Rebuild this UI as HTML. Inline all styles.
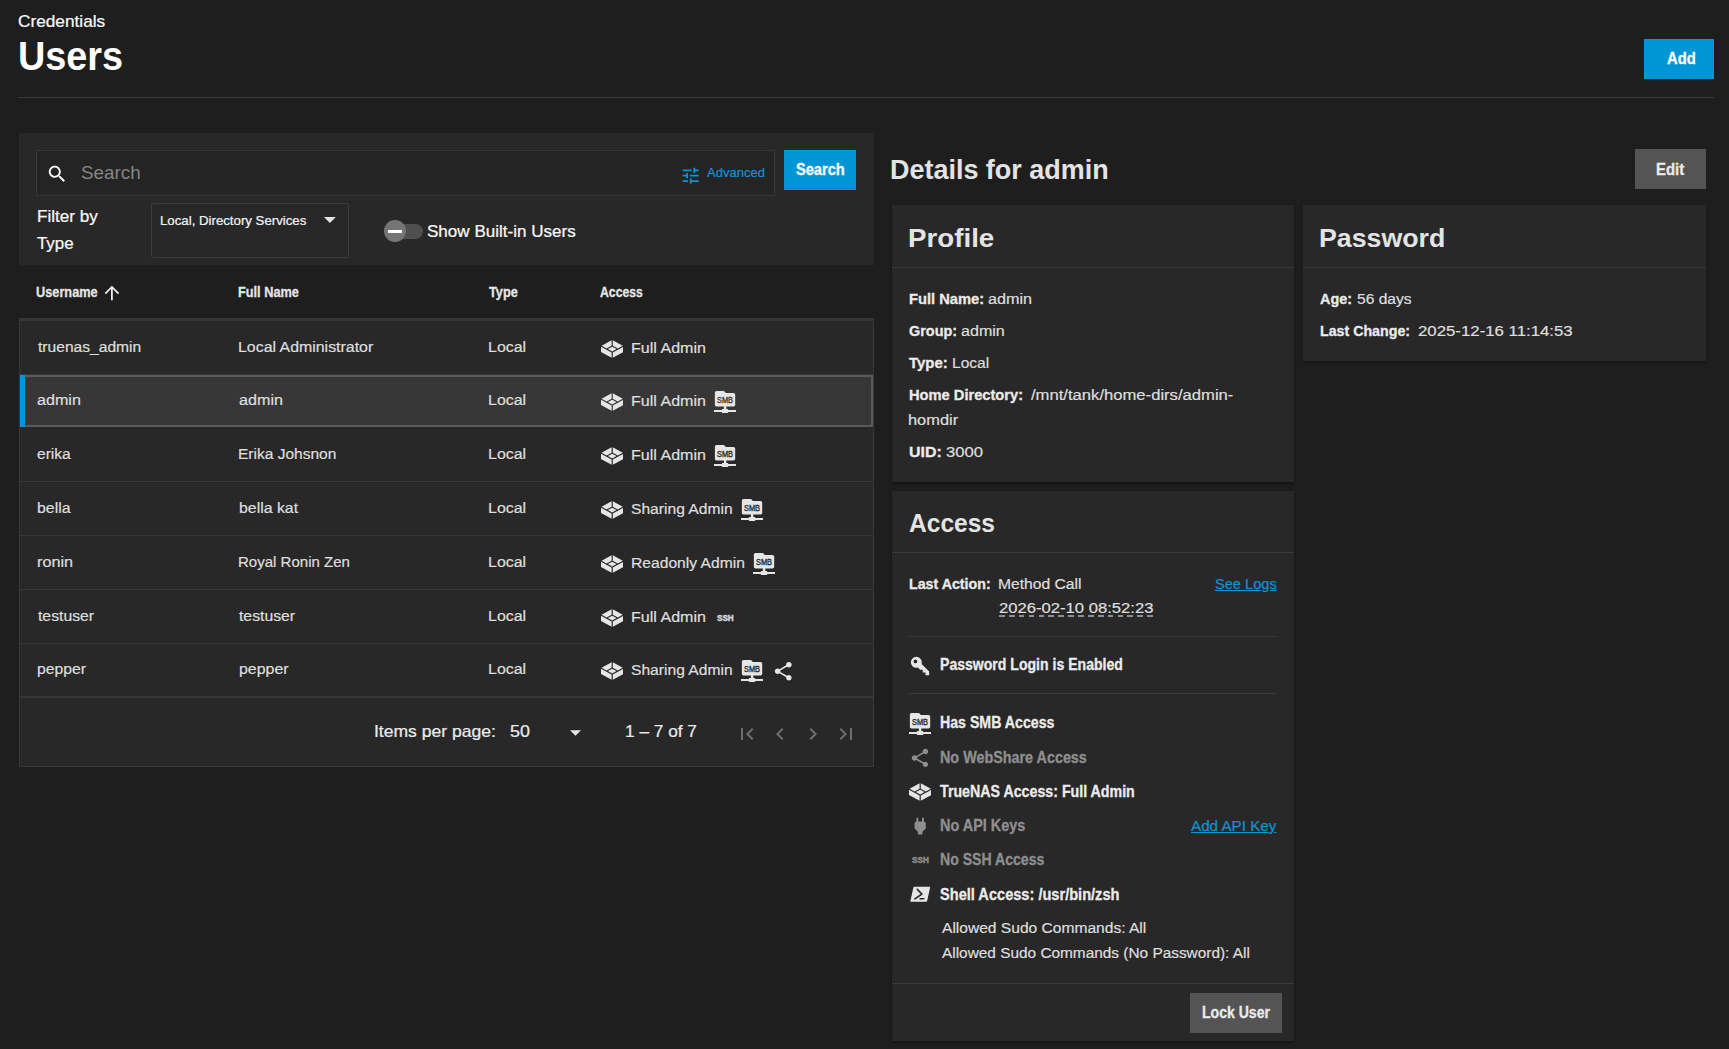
<!DOCTYPE html>
<html lang="en">
<head>
<meta charset="utf-8">
<title>Users</title>
<style>
*{box-sizing:border-box;margin:0;padding:0}
html,body{width:1729px;height:1049px;overflow:hidden;background:#1e1e1e}
body{font-family:"Liberation Sans",sans-serif;color:#fff;position:relative}
.abs{position:absolute}
.t{position:absolute;white-space:nowrap;line-height:1;transform-origin:0 0}
svg{display:block;position:absolute}
.b{font-weight:bold}
.bx{position:absolute;height:40px}
.primary{background:#0095d5}
.grey{background:#545454}
.hr{position:absolute;height:1px;background:#3a3a3a}
.card{position:absolute;background:#282828;box-shadow:0 2px 3px rgba(0,0,0,.35)}
.u{text-decoration:underline}
.ssh,.ssho{-webkit-text-stroke:.45px currentColor}
.acc,.off,.lbl,.th,.btn,.btng{-webkit-text-stroke:.3px currentColor}
.td,.val,.pg,.lab,.crumb,.link,.sel,.adv{-webkit-text-stroke:.22px currentColor}
.crumb{font-size:16.4px;color:#fafafa}
.h1{font-size:41.5px;color:#fff;font-weight:bold}
.btn{font-size:15.8px;color:#fff;font-weight:bold}
.btng{font-size:15.8px;color:#ebebeb;font-weight:bold}
.ph{font-size:19px;color:#868686}
.adv{font-size:12.6px;color:#0c93d3}
.lab{font-size:16.4px;color:#fafafa}
.sel{font-size:13.3px;color:#f4f4f4}
.th{font-size:15px;color:#e6e6e6;font-weight:bold}
.td{font-size:15.4px;color:#dedede}
.pg{font-size:16.5px;color:#ececec}
.hd{font-size:27.5px;color:#e4e4e4;font-weight:bold}
.h2{font-size:26px;color:#e4e4e4;font-weight:bold}
.lbl{font-size:15.5px;color:#ececec;font-weight:bold}
.val{font-size:15.3px;color:#dedede}
.link{font-size:15.3px;color:#0c93d3}
.acc{font-size:16.4px;color:#ececec;font-weight:bold}
.off{font-size:16.4px;color:#8f8f8f;font-weight:bold}
.ssh{font-size:8.4px;color:#d8d8d8;font-weight:bold}
.ssho{font-size:8.4px;color:#8f8f8f;font-weight:bold}
</style>
</head>
<body>
<!-- page header -->
<div class="t crumb" style="left:17.91px;top:13px;transform:scaleX(1.052)">Credentials</div>
<h1 class="t h1" style="left:18.02px;top:35px;transform:scaleX(0.911)">Users</h1>
<div class="bx primary" style="left:1644px;top:39px;width:70px"></div>
<span class="t btn" style="left:1666.54px;top:51px;transform:scaleX(0.932)">Add</span>
<div class="hr" style="left:18px;top:97px;width:1696px"></div>
<!-- users list card -->
<div class="abs" style="left:19px;top:133px;width:855px;height:132px;background:#282828"></div>
<div class="abs" style="left:19px;top:318px;width:855px;height:449px;background:#282828;border:1.2px solid #383838;border-top:none"></div>
<div class="abs" style="left:36px;top:150px;width:739px;height:46px;border:1px solid #373737;background:#242424"></div>
<svg style="left:46px;top:163.3px" width="22.2" height="22.2" viewBox="0 0 24 24"><path fill="#fff" d="M15.5 14h-.79l-.28-.27C15.41 12.59 16 11.11 16 9.5 16 5.91 13.09 3 9.5 3S3 5.91 3 9.5 5.91 16 9.5 16c1.61 0 3.09-.59 4.23-1.57l.27.28v.79l5 4.99L20.49 19l-4.99-5zm-6 0C7.01 14 5 11.99 5 9.5S7.01 5 9.5 5 14 7.01 14 9.5 11.99 14 9.5 14z"/></svg>
<div class="t ph" style="left:80.91px;top:163px;transform:scaleX(0.991)">Search</div>
<svg style="left:680px;top:164.5px" width="21.4" height="21.4" viewBox="0 0 24 24"><path fill="#0c93d3" d="M3 17v2h6v-2H3zM3 5v2h10V5H3zm10 16v-2h8v-2h-8v-2h-2v6h2zM7 9v2H3v2h4v2h2V9H7zm14 4v-2H11v2h10zm-6-4h2V7h4V5h-4V3h-2v6z"/></svg>
<div class="t adv" style="left:707.2px;top:167px;transform:scaleX(1.033)">Advanced</div>
<div class="bx primary" style="left:784px;top:150px;width:72px"></div>
<span class="t btn" style="left:795.87px;top:162px;transform:scaleX(0.924)">Search</span>
<label class="t lab" style="left:36.8px;top:208px;transform:scaleX(1.045)">Filter by</label>
<label class="t lab" style="left:36.98px;top:235px;transform:scaleX(1.028)">Type</label>
<div class="abs" style="left:151px;top:203px;width:198px;height:55px;border:1px solid #3c3c3c;border-radius:2px"></div>
<div class="t sel" style="left:159.61px;top:214px;transform:scaleX(0.995)">Local, Directory Services</div>
<svg style="left:324.1px;top:217.1px" width="11.8" height="6" viewBox="0 0 10 5"><path fill="#e6e6e6" d="M0 0h10L5 5z"/></svg>
<div class="abs" style="left:388px;top:224px;width:34.8px;height:14.7px;border-radius:8px;background:#4f4f4f"></div>
<div class="abs" style="left:383.7px;top:220px;width:22.2px;height:22.2px;border-radius:12px;background:#757575"></div>
<div class="abs" style="left:388.2px;top:230.2px;width:13.4px;height:2.4px;background:#fff"></div>
<label class="t lab" style="left:427.32px;top:223px;transform:scaleX(1.04)">Show Built-in Users</label>
<!-- table header -->
<div class="abs" style="left:19px;top:265px;width:856px;height:54px;background:#1e1e1e"></div>
<div class="abs" style="left:19px;top:318px;width:855px;height:3px;background:#373737"></div>
<div class="t th" style="left:35.76px;top:284px;transform:scaleX(0.85)">Username</div>
<svg style="left:101.2px;top:282.4px" width="21.8" height="21.8" viewBox="0 0 24 24"><path fill="#ececec" d="M4 12l1.41 1.41L11 7.83V20h2V7.83l5.58 5.59L20 12l-8-8-8 8z"/></svg>
<div class="t th" style="left:238.06px;top:284px;transform:scaleX(0.85)">Full Name</div>
<div class="t th" style="left:489.01px;top:284px;transform:scaleX(0.852)">Type</div>
<div class="t th" style="left:600.4px;top:284px;transform:scaleX(0.815)">Access</div>
<!-- rows -->
<div class="abs" style="left:20px;top:374px;width:853px;height:1px;background:#373737"></div>
<div class="t td" style="left:37.88px;top:339px;transform:scaleX(1.014)">truenas_admin</div>
<div class="t td" style="left:238.47px;top:339px;transform:scaleX(1.033)">Local Administrator</div>
<div class="t td" style="left:488.46px;top:339px;transform:scaleX(1.037)">Local</div>
<svg style="left:600.6px;top:339.9px" width="22.4" height="18" viewBox="0 0 22.5 18.5" preserveAspectRatio="none"><path fill="#e6e6e6" d="M10.65.33L.62 5.86l5 2.75 5.03-2.76zM11.85.33l10.03 5.53-5 2.75-5.03-2.76zM11.25 6.89l4.38 2.41-4.38 2.41L6.87 9.3zM0 6.89l10.65 5.86v5.42L0 12.3zM22.5 6.89l-10.65 5.86v5.42L22.5 12.3z"/></svg>
<div class="t td" style="left:630.66px;top:340px;transform:scaleX(1.043)">Full Admin</div>
<div class="abs" style="left:20px;top:374.9px;width:853.1px;height:52.4px;background:#373737;border:2.2px solid #5a5a5a;border-left:none"></div>
<div class="abs" style="left:20px;top:374.9px;width:5.4px;height:52.4px;background:#0095d5"></div>
<div class="t td" style="left:37.18px;top:392px;transform:scaleX(1.047)">admin</div>
<div class="t td" style="left:238.98px;top:392px;transform:scaleX(1.049)">admin</div>
<div class="t td" style="left:488.46px;top:392px;transform:scaleX(1.037)">Local</div>
<svg style="left:600.6px;top:393.2px" width="22.4" height="18" viewBox="0 0 22.5 18.5" preserveAspectRatio="none"><path fill="#e6e6e6" d="M10.65.33L.62 5.86l5 2.75 5.03-2.76zM11.85.33l10.03 5.53-5 2.75-5.03-2.76zM11.25 6.89l4.38 2.41-4.38 2.41L6.87 9.3zM0 6.89l10.65 5.86v5.42L0 12.3zM22.5 6.89l-10.65 5.86v5.42L22.5 12.3z"/></svg>
<div class="t td" style="left:630.66px;top:393px;transform:scaleX(1.043)">Full Admin</div>
<svg style="left:714.2px;top:391px" width="22" height="22.2" viewBox="0 0 22 22.2"><path fill="#e6e6e6" d="M2.56 0H9.4c.6 0 1.1.3 1.4.7l1 1.3h7.7c.94 0 1.7.76 1.7 1.7v10.04c0 .94-.76 1.7-1.7 1.7H2.56c-.94 0-1.7-.76-1.7-1.7V1.7C.86.76 1.62 0 2.56 0zM9.9 15.44h2.4v2.6h1.4c.3 0 .5.2.5.5v.4H22v2.1h-7.8v.6c0 .3-.2.5-.5.5H8.4c-.3 0-.5-.2-.5-.5v-.6H0v-2.1h7.9v-.4c0-.3.2-.5.5-.5h1.5z"/><text x="3" y="11.85" textLength="16" lengthAdjust="spacingAndGlyphs" font-family="Liberation Sans,sans-serif" font-size="8.8" fill="#383838" stroke="#383838" stroke-width=".35">SMB</text></svg>
<div class="abs" style="left:20px;top:481px;width:853px;height:1px;background:#373737"></div>
<div class="t td" style="left:37.19px;top:446px;transform:scaleX(1.012)">erika</div>
<div class="t td" style="left:238.49px;top:446px;transform:scaleX(1.008)">Erika Johsnon</div>
<div class="t td" style="left:488.46px;top:446px;transform:scaleX(1.037)">Local</div>
<svg style="left:600.6px;top:447.1px" width="22.4" height="18" viewBox="0 0 22.5 18.5" preserveAspectRatio="none"><path fill="#e6e6e6" d="M10.65.33L.62 5.86l5 2.75 5.03-2.76zM11.85.33l10.03 5.53-5 2.75-5.03-2.76zM11.25 6.89l4.38 2.41-4.38 2.41L6.87 9.3zM0 6.89l10.65 5.86v5.42L0 12.3zM22.5 6.89l-10.65 5.86v5.42L22.5 12.3z"/></svg>
<div class="t td" style="left:630.66px;top:447px;transform:scaleX(1.043)">Full Admin</div>
<svg style="left:714.2px;top:444.9px" width="22" height="22.2" viewBox="0 0 22 22.2"><path fill="#e6e6e6" d="M2.56 0H9.4c.6 0 1.1.3 1.4.7l1 1.3h7.7c.94 0 1.7.76 1.7 1.7v10.04c0 .94-.76 1.7-1.7 1.7H2.56c-.94 0-1.7-.76-1.7-1.7V1.7C.86.76 1.62 0 2.56 0zM9.9 15.44h2.4v2.6h1.4c.3 0 .5.2.5.5v.4H22v2.1h-7.8v.6c0 .3-.2.5-.5.5H8.4c-.3 0-.5-.2-.5-.5v-.6H0v-2.1h7.9v-.4c0-.3.2-.5.5-.5h1.5z"/><text x="3" y="11.85" textLength="16" lengthAdjust="spacingAndGlyphs" font-family="Liberation Sans,sans-serif" font-size="8.8" fill="#282828" stroke="#282828" stroke-width=".35">SMB</text></svg>
<div class="abs" style="left:20px;top:535px;width:853px;height:1px;background:#373737"></div>
<div class="t td" style="left:36.93px;top:500px;transform:scaleX(1.031)">bella</div>
<div class="t td" style="left:238.73px;top:500px;transform:scaleX(1.03)">bella kat</div>
<div class="t td" style="left:488.46px;top:500px;transform:scaleX(1.037)">Local</div>
<svg style="left:600.6px;top:501.1px" width="22.4" height="18" viewBox="0 0 22.5 18.5" preserveAspectRatio="none"><path fill="#e6e6e6" d="M10.65.33L.62 5.86l5 2.75 5.03-2.76zM11.85.33l10.03 5.53-5 2.75-5.03-2.76zM11.25 6.89l4.38 2.41-4.38 2.41L6.87 9.3zM0 6.89l10.65 5.86v5.42L0 12.3zM22.5 6.89l-10.65 5.86v5.42L22.5 12.3z"/></svg>
<div class="t td" style="left:631.03px;top:501px;transform:scaleX(1.015)">Sharing Admin</div>
<svg style="left:741.1px;top:498.9px" width="22" height="22.2" viewBox="0 0 22 22.2"><path fill="#e6e6e6" d="M2.56 0H9.4c.6 0 1.1.3 1.4.7l1 1.3h7.7c.94 0 1.7.76 1.7 1.7v10.04c0 .94-.76 1.7-1.7 1.7H2.56c-.94 0-1.7-.76-1.7-1.7V1.7C.86.76 1.62 0 2.56 0zM9.9 15.44h2.4v2.6h1.4c.3 0 .5.2.5.5v.4H22v2.1h-7.8v.6c0 .3-.2.5-.5.5H8.4c-.3 0-.5-.2-.5-.5v-.6H0v-2.1h7.9v-.4c0-.3.2-.5.5-.5h1.5z"/><text x="3" y="11.85" textLength="16" lengthAdjust="spacingAndGlyphs" font-family="Liberation Sans,sans-serif" font-size="8.8" fill="#282828" stroke="#282828" stroke-width=".35">SMB</text></svg>
<div class="abs" style="left:20px;top:589px;width:853px;height:1px;background:#373737"></div>
<div class="t td" style="left:36.9px;top:554px;transform:scaleX(1.055)">ronin</div>
<div class="t td" style="left:238.1px;top:554px;transform:scaleX(0.976)">Royal Ronin Zen</div>
<div class="t td" style="left:488.46px;top:554px;transform:scaleX(1.037)">Local</div>
<svg style="left:600.6px;top:555.1px" width="22.4" height="18" viewBox="0 0 22.5 18.5" preserveAspectRatio="none"><path fill="#e6e6e6" d="M10.65.33L.62 5.86l5 2.75 5.03-2.76zM11.85.33l10.03 5.53-5 2.75-5.03-2.76zM11.25 6.89l4.38 2.41-4.38 2.41L6.87 9.3zM0 6.89l10.65 5.86v5.42L0 12.3zM22.5 6.89l-10.65 5.86v5.42L22.5 12.3z"/></svg>
<div class="t td" style="left:630.77px;top:555px;transform:scaleX(1.016)">Readonly Admin</div>
<svg style="left:753.2px;top:552.9px" width="22" height="22.2" viewBox="0 0 22 22.2"><path fill="#e6e6e6" d="M2.56 0H9.4c.6 0 1.1.3 1.4.7l1 1.3h7.7c.94 0 1.7.76 1.7 1.7v10.04c0 .94-.76 1.7-1.7 1.7H2.56c-.94 0-1.7-.76-1.7-1.7V1.7C.86.76 1.62 0 2.56 0zM9.9 15.44h2.4v2.6h1.4c.3 0 .5.2.5.5v.4H22v2.1h-7.8v.6c0 .3-.2.5-.5.5H8.4c-.3 0-.5-.2-.5-.5v-.6H0v-2.1h7.9v-.4c0-.3.2-.5.5-.5h1.5z"/><text x="3" y="11.85" textLength="16" lengthAdjust="spacingAndGlyphs" font-family="Liberation Sans,sans-serif" font-size="8.8" fill="#282828" stroke="#282828" stroke-width=".35">SMB</text></svg>
<div class="abs" style="left:20px;top:643px;width:853px;height:1px;background:#373737"></div>
<div class="t td" style="left:37.7px;top:608px;transform:scaleX(1.023)">testuser</div>
<div class="t td" style="left:239.1px;top:608px;transform:scaleX(1.023)">testuser</div>
<div class="t td" style="left:488.46px;top:608px;transform:scaleX(1.037)">Local</div>
<svg style="left:600.6px;top:609px" width="22.4" height="18" viewBox="0 0 22.5 18.5" preserveAspectRatio="none"><path fill="#e6e6e6" d="M10.65.33L.62 5.86l5 2.75 5.03-2.76zM11.85.33l10.03 5.53-5 2.75-5.03-2.76zM11.25 6.89l4.38 2.41-4.38 2.41L6.87 9.3zM0 6.89l10.65 5.86v5.42L0 12.3zM22.5 6.89l-10.65 5.86v5.42L22.5 12.3z"/></svg>
<div class="t td" style="left:630.66px;top:609px;transform:scaleX(1.043)">Full Admin</div>
<div class="t ssh" style="left:717.03px;top:614px;transform:scaleX(0.973)">SSH</div>
<div class="abs" style="left:20px;top:696px;width:853px;height:2px;background:#373737"></div>
<div class="t td" style="left:36.7px;top:661px;transform:scaleX(1.025)">pepper</div>
<div class="t td" style="left:238.72px;top:661px;transform:scaleX(1.036)">pepper</div>
<div class="t td" style="left:488.46px;top:661px;transform:scaleX(1.037)">Local</div>
<svg style="left:600.6px;top:662.2px" width="22.4" height="18" viewBox="0 0 22.5 18.5" preserveAspectRatio="none"><path fill="#e6e6e6" d="M10.65.33L.62 5.86l5 2.75 5.03-2.76zM11.85.33l10.03 5.53-5 2.75-5.03-2.76zM11.25 6.89l4.38 2.41-4.38 2.41L6.87 9.3zM0 6.89l10.65 5.86v5.42L0 12.3zM22.5 6.89l-10.65 5.86v5.42L22.5 12.3z"/></svg>
<div class="t td" style="left:631.03px;top:662px;transform:scaleX(1.015)">Sharing Admin</div>
<svg style="left:741.1px;top:660px" width="22" height="22.2" viewBox="0 0 22 22.2"><path fill="#e6e6e6" d="M2.56 0H9.4c.6 0 1.1.3 1.4.7l1 1.3h7.7c.94 0 1.7.76 1.7 1.7v10.04c0 .94-.76 1.7-1.7 1.7H2.56c-.94 0-1.7-.76-1.7-1.7V1.7C.86.76 1.62 0 2.56 0zM9.9 15.44h2.4v2.6h1.4c.3 0 .5.2.5.5v.4H22v2.1h-7.8v.6c0 .3-.2.5-.5.5H8.4c-.3 0-.5-.2-.5-.5v-.6H0v-2.1h7.9v-.4c0-.3.2-.5.5-.5h1.5z"/><text x="3" y="11.85" textLength="16" lengthAdjust="spacingAndGlyphs" font-family="Liberation Sans,sans-serif" font-size="8.8" fill="#282828" stroke="#282828" stroke-width=".35">SMB</text></svg>
<svg style="left:771.8px;top:659.6px" width="22.5" height="22.5" viewBox="0 0 24 24"><path fill="#e6e6e6" d="M18 16.08c-.76 0-1.44.3-1.96.77L8.91 12.7c.05-.23.09-.46.09-.7s-.04-.47-.09-.7l7.05-4.11c.54.5 1.25.81 2.04.81 1.66 0 3-1.34 3-3s-1.34-3-3-3-3 1.34-3 3c0 .24.04.47.09.7L8.04 9.81C7.5 9.31 6.79 9 6 9c-1.66 0-3 1.34-3 3s1.34 3 3 3c.79 0 1.5-.31 2.04-.81l7.12 4.16c-.05.21-.08.43-.08.65 0 1.61 1.31 2.92 2.92 2.92 1.61 0 2.92-1.31 2.92-2.92s-1.31-2.92-2.92-2.92z"/></svg>
<!-- paginator -->
<div class="t pg" style="left:374.01px;top:723px;transform:scaleX(1.063)">Items per page:</div>
<div class="t pg" style="left:509.94px;top:723px;transform:scaleX(1.083)">50</div>
<svg style="left:569.5px;top:730px" width="11" height="6" viewBox="0 0 10 5"><path fill="#e6e6e6" d="M0 0h10L5 5z"/></svg>
<div class="t pg" style="left:625.16px;top:723px;transform:scaleX(1.045)">1 – 7 of 7</div>
<svg style="left:734.5px;top:722px" width="24" height="24" viewBox="0 0 24 24"><path fill="#6e6e6e" d="M18.41 16.59L13.82 12l4.59-4.59L17 6l-6 6 6 6zM6 6h2v12H6z"/></svg>
<svg style="left:767.6px;top:722px" width="24" height="24" viewBox="0 0 24 24"><path fill="#6e6e6e" d="M15.41 7.41L14 6l-6 6 6 6 1.41-1.41L10.83 12z"/></svg>
<svg style="left:801.2px;top:722px" width="24" height="24" viewBox="0 0 24 24"><path fill="#6e6e6e" d="M10 6L8.59 7.41 13.17 12l-4.58 4.59L10 18l6-6z"/></svg>
<svg style="left:834.1px;top:722px" width="24" height="24" viewBox="0 0 24 24"><path fill="#6e6e6e" d="M5.59 7.41L10.18 12l-4.59 4.59L7 18l6-6-6-6zM16 6h2v12h-2z"/></svg>
<!-- details -->
<h2 class="t hd" style="left:890.29px;top:156px;transform:scaleX(0.98)">Details for admin</h2>
<div class="bx grey" style="left:1635px;top:149px;width:71px"></div>
<span class="t btng" style="left:1656.29px;top:162px;transform:scaleX(0.945)">Edit</span>
<div class="card" style="left:892px;top:205px;width:402px;height:276.8px"></div>
<div class="card" style="left:1303px;top:205px;width:403px;height:156px"></div>
<div class="card" style="left:892px;top:491px;width:402px;height:550px"></div>
<!-- profile -->
<h3 class="t h2" style="left:907.93px;top:225px;transform:scaleX(1.066)">Profile</h3>
<div class="hr" style="left:892px;top:267px;width:402px"></div>
<b class="t lbl" style="left:908.7px;top:291px;transform:scaleX(0.947)">Full Name:</b>
<div class="t val" style="left:988.07px;top:291px;transform:scaleX(1.058)">admin</div>
<b class="t lbl" style="left:908.61px;top:323px;transform:scaleX(0.931)">Group:</b>
<div class="t val" style="left:961.47px;top:323px;transform:scaleX(1.051)">admin</div>
<b class="t lbl" style="left:909.3px;top:355px;transform:scaleX(0.963)">Type:</b>
<div class="t val" style="left:951.65px;top:355px;transform:scaleX(1.017)">Local</div>
<b class="t lbl" style="left:908.61px;top:387px;transform:scaleX(0.946)">Home Directory:</b>
<div class="t val" style="left:1031.47px;top:387px;transform:scaleX(1.087)">/mnt/tank/home-dirs/admin-</div>
<div class="t val" style="left:908.48px;top:412px;transform:scaleX(1.072)">homdir</div>
<b class="t lbl" style="left:908.55px;top:444px;transform:scaleX(1.027)">UID:</b>
<div class="t val" style="left:946.06px;top:444px;transform:scaleX(1.088)">3000</div>
<!-- password -->
<h3 class="t h2" style="left:1319.2px;top:225px;transform:scaleX(1.028)">Password</h3>
<div class="hr" style="left:1303px;top:267px;width:403px"></div>
<b class="t lbl" style="left:1320.27px;top:291px;transform:scaleX(0.93)">Age:</b>
<div class="t val" style="left:1356.59px;top:291px;transform:scaleX(1.02)">56 days</div>
<b class="t lbl" style="left:1319.55px;top:323px;transform:scaleX(0.917)">Last Change:</b>
<div class="t val" style="left:1417.88px;top:323px;transform:scaleX(1.098)">2025-12-16 11:14:53</div>
<!-- access -->
<h3 class="t h2" style="left:908.63px;top:510px;transform:scaleX(0.944)">Access</h3>
<div class="hr" style="left:892px;top:552px;width:402px"></div>
<b class="t lbl" style="left:908.98px;top:576px;transform:scaleX(0.918)">Last Action:</b>
<div class="t val" style="left:998.38px;top:576px;transform:scaleX(1.023)">Method Call</div>
<a class="t link u" style="left:1215.02px;top:576px;transform:scaleX(0.955)">See Logs</a>
<div class="t val" style="left:998.64px;top:600px;transform:scaleX(1.087)">2026-02-10 08:52:23</div>
<div class="abs" style="left:999px;top:615.1px;width:153.9px;height:1.9px;background:repeating-linear-gradient(90deg,#8e8e8e 0 5.7px,transparent 5.7px 9.88px)"></div>
<div class="hr" style="left:909px;top:636px;width:368px"></div>
<svg style="left:909px;top:655.4px" width="22" height="22" viewBox="0 0 24 24"><path fill="#e6e6e6" d="M22,18V22H18V19H15V16H12L9.74,13.74C9.19,13.91 8.61,14 8,14A6,6 0 0,1 2,8A6,6 0 0,1 8,2A6,6 0 0,1 14,8C14,8.61 13.91,9.19 13.74,9.74L22,18M7,5A2,2 0 0,0 5,7A2,2 0 0,0 7,9A2,2 0 0,0 9,7A2,2 0 0,0 7,5Z"/></svg>
<b class="t acc" style="left:939.97px;top:656px;transform:scaleX(0.858)">Password Login is Enabled</b>
<div class="hr" style="left:909px;top:693px;width:368px"></div>
<svg style="left:909px;top:712.8px" width="22" height="22.2" viewBox="0 0 22 22.2"><path fill="#e6e6e6" d="M2.56 0H9.4c.6 0 1.1.3 1.4.7l1 1.3h7.7c.94 0 1.7.76 1.7 1.7v10.04c0 .94-.76 1.7-1.7 1.7H2.56c-.94 0-1.7-.76-1.7-1.7V1.7C.86.76 1.62 0 2.56 0zM9.9 15.44h2.4v2.6h1.4c.3 0 .5.2.5.5v.4H22v2.1h-7.8v.6c0 .3-.2.5-.5.5H8.4c-.3 0-.5-.2-.5-.5v-.6H0v-2.1h7.9v-.4c0-.3.2-.5.5-.5h1.5z"/><text x="3" y="11.85" textLength="16" lengthAdjust="spacingAndGlyphs" font-family="Liberation Sans,sans-serif" font-size="8.8" fill="#282828" stroke="#282828" stroke-width=".35">SMB</text></svg>
<b class="t acc" style="left:940.04px;top:714px;transform:scaleX(0.864)">Has SMB Access</b>
<svg style="left:909px;top:747.1px" width="21.9" height="21.9" viewBox="0 0 24 24"><path fill="#8f8f8f" d="M18 16.08c-.76 0-1.44.3-1.96.77L8.91 12.7c.05-.23.09-.46.09-.7s-.04-.47-.09-.7l7.05-4.11c.54.5 1.25.81 2.04.81 1.66 0 3-1.34 3-3s-1.34-3-3-3-3 1.34-3 3c0 .24.04.47.09.7L8.04 9.81C7.5 9.31 6.79 9 6 9c-1.66 0-3 1.34-3 3s1.34 3 3 3c.79 0 1.5-.31 2.04-.81l7.12 4.16c-.05.21-.08.43-.08.65 0 1.61 1.31 2.92 2.92 2.92 1.61 0 2.92-1.31 2.92-2.92s-1.31-2.92-2.92-2.92z"/></svg>
<b class="t off" style="left:939.74px;top:749px;transform:scaleX(0.876)">No WebShare Access</b>
<svg style="left:908.8px;top:782.8px" width="22.4" height="18" viewBox="0 0 22.5 18.5" preserveAspectRatio="none"><path fill="#e6e6e6" d="M10.65.33L.62 5.86l5 2.75 5.03-2.76zM11.85.33l10.03 5.53-5 2.75-5.03-2.76zM11.25 6.89l4.38 2.41-4.38 2.41L6.87 9.3zM0 6.89l10.65 5.86v5.42L0 12.3zM22.5 6.89l-10.65 5.86v5.42L22.5 12.3z"/></svg>
<b class="t acc" style="left:940.3px;top:783px;transform:scaleX(0.867)">TrueNAS Access: Full Admin</b>
<svg style="left:908.7px;top:814.7px" width="22.3" height="22.3" viewBox="0 0 24 24"><path fill="#8f8f8f" d="M16,7V3H14V7H10V3H8V7H8C7,7 6,8 6,9V14.5L9.5,18V21H14.5V18L18,14.5V9C18,8 17,7 16,7Z"/></svg>
<b class="t off" style="left:939.74px;top:817px;transform:scaleX(0.881)">No API Keys</b>
<a class="t link u" style="left:1190.9px;top:818px;transform:scaleX(0.994)">Add API Key</a>
<div class="t ssho" style="left:911.82px;top:856px;transform:scaleX(0.976)">SSH</div>
<b class="t off" style="left:939.79px;top:851px;transform:scaleX(0.859)">No SSH Access</b>
<svg style="left:908.6px;top:883.4px" width="22.5" height="22.5" viewBox="0 0 24 24"><path fill="#e6e6e6" d="M21.83,4C22.32,4 22.63,4.4 22.5,4.89L19.34,19.11C19.23,19.6 18.75,20 18.26,20H2.17C1.68,20 1.37,19.6 1.5,19.11L4.66,4.89C4.77,4.4 5.25,4 5.74,4H21.83M15.83,16H11.83C11.37,16 11,16.38 11,16.84C11,17.31 11.37,17.69 11.83,17.69H15.83C16.3,17.69 16.68,17.31 16.68,16.84C16.68,16.38 16.3,16 15.83,16M5.78,16.28C5.38,16.56 5.29,17.11 5.57,17.5C5.85,17.92 6.41,18 6.81,17.73C14.16,12.56 14.21,12.5 14.26,12.47C14.44,12.31 14.53,12.09 14.54,11.87C14.55,11.67 14.5,11.5 14.38,11.31L9.46,6.03C9.13,5.67 8.57,5.65 8.21,6C7.85,6.32 7.83,6.88 8.16,7.24L12.39,11.78L5.78,16.28Z"/></svg>
<b class="t acc" style="left:940.08px;top:886px;transform:scaleX(0.89)">Shell Access: /usr/bin/zsh</b>
<div class="t val" style="left:942.41px;top:920px;transform:scaleX(1.018)">Allowed Sudo Commands: All</div>
<div class="t val" style="left:942.2px;top:945px;transform:scaleX(1.006)">Allowed Sudo Commands (No Password): All</div>
<div class="hr" style="left:892px;top:983px;width:402px"></div>
<div class="bx grey" style="left:1190px;top:993px;width:92px"></div>
<span class="t btng" style="left:1201.73px;top:1005px;transform:scaleX(0.89)">Lock User</span>
</body>
</html>
